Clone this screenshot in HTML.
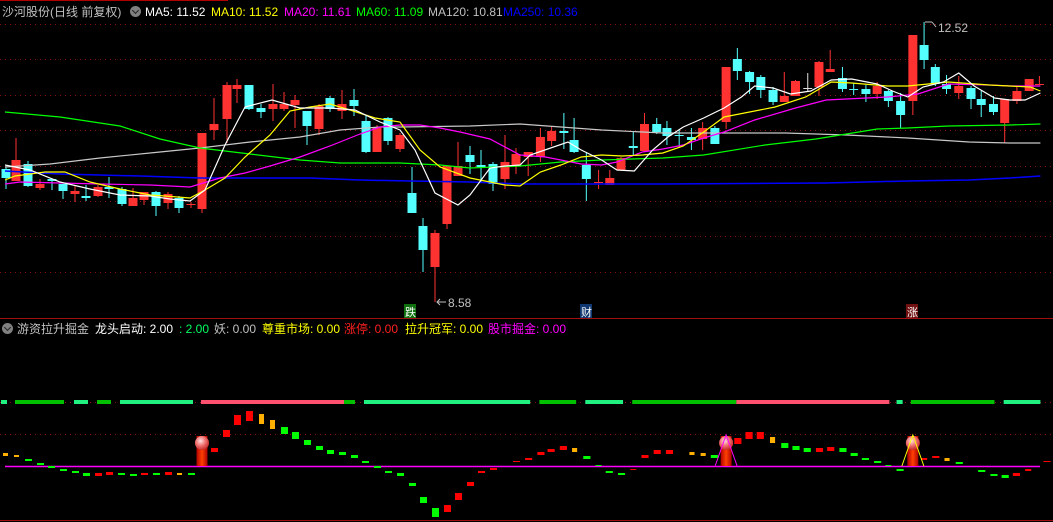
<!DOCTYPE html>
<html><head><meta charset="utf-8"><style>
html,body{margin:0;padding:0;background:#000;width:1053px;height:522px;overflow:hidden}
svg{position:absolute;left:0;top:0}
.t{position:absolute;font-family:"Liberation Sans","Noto Sans CJK SC",sans-serif;font-size:12px;white-space:nowrap;line-height:16px}
.ic{position:absolute;width:11px;height:11px;border-radius:50%;background:#808080}
.ic:after{content:"";position:absolute;left:3px;top:2px;width:4px;height:4px;border-right:1.5px solid #222;border-bottom:1.5px solid #222;transform:rotate(45deg)}
</style></head><body>
<svg id="s" width="1053" height="522" xmlns="http://www.w3.org/2000/svg">
<line x1="0" y1="0.5" x2="228" y2="0.5" stroke="#b00000"/>
<g stroke="#8a1010" stroke-dasharray="1,4" stroke-width="1">
<line x1="0" y1="24.5" x2="1053" y2="24.5"/><line x1="0" y1="59.5" x2="1053" y2="59.5"/><line x1="0" y1="95.5" x2="1053" y2="95.5"/><line x1="0" y1="130.5" x2="1053" y2="130.5"/><line x1="0" y1="166.5" x2="1053" y2="166.5"/><line x1="0" y1="201.5" x2="1053" y2="201.5"/><line x1="0" y1="236.5" x2="1053" y2="236.5"/><line x1="0" y1="272.5" x2="1053" y2="272.5"/>
<line x1="0" y1="434.5" x2="1053" y2="434.5"/><line x1="0" y1="402.5" x2="1053" y2="402.5"/>
</g>
<line x1="0" y1="318.5" x2="1053" y2="318.5" stroke="#a01010"/>
<line x1="0" y1="520.5" x2="1053" y2="520.5" stroke="#a01010"/>
<g id="cd"></g>
<g fill="none" stroke-width="1.2" id="ma">
<polyline stroke="#c8c8c8" points="5,167 50,164 100,158 150,153 200,148 250,142 300,137 340,130 380,127 400,127 470,126 520,124 560,127 600,130 660,133 720,133 780,133 840,135 900,138 960,142 1000,143 1030,143"/>
<polyline stroke="#0000ff" stroke-width="1.5" points="5,171 60,174 140,176 200,178 310,178 360,180 410,181 470,182 520,184 660,184 820,183 900,181 960,180 1000,178 1030,176"/>
<polyline stroke="#00ff00" points="5,112 60,117 120,126 160,139 200,148 250,154 300,160 340,163 400,163 440,165 470,168 520,166 560,162 600,160 660,158 700,155 760,145 810,139 840,134 870,129 900,128 940,126 1000,125 1030,124"/>
<polyline stroke="#ff00ff" points="5,184 20,182 60,183 100,184 150,185 190,187 220,178 245,173 270,166 300,157 330,146 360,134 380,127 400,125 420,125 440,128 460,132 490,139 520,155 545,157 580,164 600,165 615,162 640,152 660,149 680,145 700,138 720,132 750,120 790,108 820,100 840,99 880,97 910,94 940,84 980,85 1000,86 1030,86"/>
<polyline stroke="#ffff00" points="5,180 15,176 45,172 65,172 90,182 120,189 150,195 165,196 190,198 205,190 225,178 245,157 270,135 290,111 310,107 330,104 350,110 375,118 400,122 420,150 440,167 470,178 505,185 520,186 540,172 560,165 580,157 600,155 620,156 640,155 660,153 680,146 700,132 720,117 740,113 770,107 800,97 825,82 845,83 880,86 900,86 920,84 940,82 980,85 1020,87 1030,91"/>
<polyline stroke="#ffffff" points="5,165 30,170 60,182 90,189 120,195 150,196 170,199 190,201 205,190 225,145 245,107 272,100 300,108 330,108 355,110 380,122 400,130 415,150 435,193 458,205 470,195 490,168 505,166 520,165 530,155 550,148 567,142 580,150 600,160 615,170 632,171 650,150 665,137 680,127 700,118 720,108 737,97 750,86 768,88 785,94 805,91 825,80 845,79 870,84 885,91 900,97 915,87 935,82 950,73 965,86 985,98 1000,100 1015,100 1030,93"/>
</g>
<g fill="none" stroke="#c0c0c0"><line x1="437" y1="302" x2="446" y2="302"/><polyline points="440,299 437,302 440,305"/><line x1="925" y1="22" x2="932" y2="22"/><line x1="932" y1="22" x2="936" y2="27"/></g>
<text x="448" y="307" fill="#c0c0c0" font-family="Liberation Sans" font-size="12">8.58</text>
<text x="938" y="32" fill="#c0c0c0" font-family="Liberation Sans" font-size="12">12.52</text>
<rect x="404" y="304" width="12" height="14" fill="#107010"/><text x="405" y="316" fill="#fff" font-size="11" font-family="Noto Sans CJK SC">跌</text>
<rect x="580" y="304" width="12" height="14" fill="#103870"/><text x="581" y="316" fill="#fff" font-size="11" font-family="Noto Sans CJK SC">财</text>
<rect x="906" y="304" width="12" height="14" fill="#701010"/><text x="907" y="316" fill="#fff" font-size="11" font-family="Noto Sans CJK SC">涨</text>
<g id="band"></g>
<line x1="5" y1="466.5" x2="1040" y2="466.5" stroke="#ff00ff" stroke-width="1.5"/>
<g id="bars"></g>
</svg>
<div class="t" style="left:2px;top:4px;color:#c0c0c0">沙河股份(日线 前复权)</div>
<div class="ic" style="left:130px;top:6px"></div>
<div class="t" style="left:145px;top:4px;color:#fff">MA5: 11.52</div>
<div class="t" style="left:211px;top:4px;color:#ffff00">MA10: 11.52</div>
<div class="t" style="left:284px;top:4px;color:#ff00ff">MA20: 11.61</div>
<div class="t" style="left:356px;top:4px;color:#00ff00">MA60: 11.09</div>
<div class="t" style="left:428px;top:4px;color:#c0c0c0">MA120: 10.81</div>
<div class="t" style="left:503px;top:4px;color:#0000ff">MA250: 10.36</div>
<div class="ic" style="left:2px;top:323px"></div>
<div class="t" style="left:17px;top:321px;color:#c0c0c0">游资拉升掘金</div>
<div class="t" style="left:95px;top:321px;color:#fff">龙头启动: 2.00</div>
<div class="t" style="left:179px;top:321px;color:#00ff60">: 2.00</div>
<div class="t" style="left:214px;top:321px;color:#c0c0c0">妖: 0.00</div>
<div class="t" style="left:262px;top:321px;color:#ffff00">尊重市场: 0.00</div>
<div class="t" style="left:344px;top:321px;color:#ff2020">涨停: 0.00</div>
<div class="t" style="left:405px;top:321px;color:#ffff00">拉升冠军: 0.00</div>
<div class="t" style="left:488px;top:321px;color:#ff00ff">股市掘金: 0.00</div>
<script>
var NS="http://www.w3.org/2000/svg";
function fx(x){return x>520?520+(x-520)*1.0204:x}
function el(p,t,a){var e=document.createElementNS(NS,t);for(var k in a)e.setAttribute(k,a[k]);p.appendChild(e);return e}
var C=[[6,'c',167,189,169,178],[16,'r',138,181,160,181],[28,'c',161,187,164,186],[40,'r',179,190,184,188],[52,'c',179,190,179,181],[63,'c',184,199,184,191],[75,'r',185,202,191,194],[86,'c',185,201,196,198],[98,'r',185,197,187,196],[109,'c',177,198,187,189],[122,'c',187,206,189,204],[133,'r',188,206,198,206],[144,'r',192,205,192,200],[156,'c',191,216,192,206],[168,'r',192,209,194,203],[179,'c',196,213,198,208],[191,'r',202,208,204,205],[202,'r',133,213,133,209],[214,'r',98,140,124,130],[227,'r',82,143,85,119],[237,'r',79,103,85,89],[249,'c',85,110,85,109],[261,'c',104,118,108,112],[273,'r',84,121,104,109],[284,'r',92,111,104,109],[295,'r',95,128,100,105],[307,'c',111,145,111,126],[319,'r',104,135,106,129],[330,'c',96,112,98,109],[342,'r',90,119,104,111],[354,'c',89,116,100,106],[366,'c',115,153,121,152],[377,'r',125,152,127,152],[388,'c',117,145,118,141],[400,'r',133,152,135,149],[412,'c',167,213,193,213],[423,'c',218,272,226,250],[435,'r',230,302,233,267],[447,'r',166,229,166,224],[458,'r',142,176,166,176],[470,'c',146,174,155,162],[481,'c',150,182,165,167],[493,'c',162,191,164,184],[505,'r',135,189,162,179],[516,'r',148,174,154,166],[528,'r',152,176,152,157],[540,'r',128,162,137,157],[551,'r',126,146,131,141],[563,'c',113,149,131,133],[573,'c',118,153,140,152],[585,'c',153,201,165,179],[597,'r',170,189,182,183],[608,'r',170,185,178,185],[619,'r',157,170,158,170],[631,'c',131,155,146,148],[642,'r',113,151,124,151],[654,'c',118,134,124,132],[664,'c',121,145,128,136],[676,'c',130,148,135,136],[688,'c',128,150,137,140],[699,'r',122,150,128,139],[711,'c',126,144,128,144],[722,'r',67,129,67,122],[733,'c',48,80,59,71],[745,'c',71,94,72,82],[756,'c',75,98,77,90],[768,'c',87,105,90,102],[779,'r',72,102,96,102],[790,'r',80,96,81,96],[802,'w',73,91,88,89],[813,'r',61,96,62,87],[824,'r',50,72,69,72],[836,'c',67,92,78,89],[847,'c',83,95,89,90],[859,'c',85,102,89,94],[870,'r',82,99,86,94],[881,'c',90,107,91,101],[893,'c',93,128,101,115],[905,'r',35,115,35,101],[916,'c',22,69,45,60],[927,'c',64,86,67,84],[938,'c',75,94,84,89],[950,'r',76,99,86,93],[962,'c',86,109,88,99],[972,'c',91,117,99,105],[984,'c',96,115,104,112],[995,'r',99,143,99,123],[1007,'r',86,104,91,101],[1019,'r',79,91,79,91],[1029,'r',76,85,84,85]];
var cd=document.getElementById('cd');
C.forEach(function(c){var col=c[1]=='r'?'#ff3232':c[1]=='c'?'#54ffff':'#e0e0e0';var x=fx(c[0]);
el(cd,'rect',{x:x-0.5,y:c[2],width:1,height:c[3]-c[2],fill:col});
el(cd,'rect',{x:x-4.5,y:c[4],width:9,height:Math.max(1,c[5]-c[4]),fill:col});});
Array.prototype.forEach.call(document.querySelectorAll('#ma polyline'),function(p){
p.setAttribute('points',p.getAttribute('points').split(' ').map(function(s){var a=s.split(',');return fx(+a[0])+','+a[1]}).join(' '));});
var LG='#20f080',DG='#00c000',PK='#ff5070';
var B=[[1,7,LG],[15,64,DG],[74,88,LG],[97,111,DG],[120,193,LG],[201,344,PK],[344,355,DG],[364,520,LG],[520,530,LG],[539,575,DG],[584,621,LG],[630,732,DG],[732,882,PK],[889,895,LG],[903,985,DG],[994,1030,LG]];
var bd=document.getElementById('band');
B.forEach(function(b){var a=fx(b[0]),z=fx(b[1]);el(bd,'rect',{x:a,y:400,width:z-a,height:4,fill:b[2]})});
var R='#ff0000',G='#00ff00',O='#ffb000';
var P=[[3,8,453,456,O],[14,19,455,457,O],[25,32,459,461,G],[37,44,463,465,G],[48,55,466,468,G],[60,67,469,471,G],[72,79,471,473,G],[83,90,473,476,G],[95,102,473,476,R],[106,113,472,475,R],[118,125,473,475,G],[130,137,474,476,G],[141,148,473,475,R],[153,160,473,475,G],[165,172,472,475,R],[177,182,473,475,O],[188,195,473,475,G],[211,218,448,452,R],[223,230,430,437,R],[234,241,415,425,R],[246,253,411,421,R],[259,264,414,424,O],[270,275,420,429,O],[281,288,427,434,G],[292,299,432,439,G],[304,311,440,445,G],[316,323,446,450,G],[327,334,450,454,G],[339,346,452,455,G],[351,358,455,458,G],[362,369,461,463,G],[374,381,466,468,G],[385,392,471,473,G],[397,404,473,476,G],[409,416,483,486,G],[420,427,497,503,G],[432,439,508,517,G],[444,451,505,512,R],[455,462,493,500,R],[467,474,482,486,R],[478,485,471,473,R],[490,497,468,470,R],[513,520,461,462,R],[525,532,458,460,R],[537,544,452,455,R],[547,554,449,452,R],[559,566,446,450,R],[571,576,448,452,O],[582,589,456,459,G],[594,600,465,466,G],[604,611,471,473,G],[616,623,473,475,G],[628,634,469,470,R],[639,646,455,458,R],[651,658,450,454,R],[663,670,450,454,R],[686,691,452,455,O],[697,702,453,456,O],[707,714,455,458,G],[730,737,438,444,R],[741,748,432,439,R],[752,759,432,439,R],[765,770,437,443,O],[776,783,443,448,G],[787,794,446,450,G],[798,805,448,452,G],[810,817,448,452,R],[821,828,447,451,R],[833,840,448,452,G],[844,851,453,456,G],[855,862,458,460,G],[867,874,461,463,G],[878,884,465,466,G],[889,896,469,471,G],[913,919,458,460,R],[924,931,456,458,R],[936,941,458,461,O],[947,954,462,464,G],[969,976,470,472,G],[981,988,474,476,G],[992,999,475,478,G],[1003,1010,473,476,R],[1015,1021,469,471,R],[1033,1040,461,462,R]];
var bs=document.getElementById('bars');
P.forEach(function(p){var a=fx(p[0]),z=fx(p[1]);el(bs,'rect',{x:a,y:p[2],width:z-a,height:p[3]-p[2],fill:p[4]})});
var defs=el(document.getElementById('s'),'defs',{});
var rg=el(defs,'radialGradient',{id:'bg',cx:'0.4',cy:'0.35',r:'0.7'});
el(rg,'stop',{offset:'0','stop-color':'#ffe0e0'});el(rg,'stop',{offset:'0.5','stop-color':'#f07070'});el(rg,'stop',{offset:'1','stop-color':'#c02020'});
var lg=el(defs,'linearGradient',{id:'cg',x1:'0',x2:'1',y1:'0',y2:'0'});
el(lg,'stop',{offset:'0','stop-color':'#b00000'});el(lg,'stop',{offset:'0.5','stop-color':'#ff4000'});el(lg,'stop',{offset:'1','stop-color':'#b00000'});
[[202,null],[722,'#ff00ff'],[905,'#ffff00']].forEach(function(s){var x=fx(s[0]);
el(bs,'rect',{x:x-5.5,y:436,width:11,height:30,fill:'url(#cg)'});
el(bs,'circle',{cx:x,cy:443,r:7,fill:'url(#bg)'});
if(s[1])el(bs,'polyline',{points:(x-11)+',466 '+x+',435 '+(x+11)+',466',fill:'none',stroke:s[1],'stroke-width':1});
});
</script>
</body></html>
